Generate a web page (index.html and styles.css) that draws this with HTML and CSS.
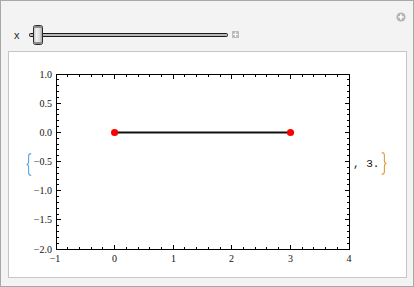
FILE: index.html
```html
<!DOCTYPE html>
<html>
<head>
<meta charset="utf-8">
<link rel="stylesheet" href="styles.css">
</head>
<body>
<div class="window">
  <span class="corner-btn">
    <svg width="10" height="10" viewBox="0 0 10 10"><circle cx="5" cy="5" r="4.6" fill="#b4b4b4"/><path d="M5 2.3V7.7M2.3 5H7.7" stroke="#fff" stroke-width="1.6"/></svg>
  </span>
  <div class="controls">
    <span class="var">x</span>
    <svg class="slider" width="203" height="20" viewBox="0 0 203 20">
      <rect x="0.5" y="8.5" width="198" height="3" rx="1" fill="#9a9a9a" stroke="#1a1a1a"/>
      <rect x="1" y="9.5" width="197" height="1" fill="#d8d8d8"/>
      <defs>
        <linearGradient id="tg" x1="0" x2="1" y1="0" y2="0">
          <stop offset="0" stop-color="#bdbdbd"/>
          <stop offset="0.35" stop-color="#f2f2f2"/>
          <stop offset="0.7" stop-color="#d9d9d9"/>
          <stop offset="1" stop-color="#9c9c9c"/>
        </linearGradient>
      </defs>
      <rect x="4.5" y="0.5" width="9" height="19" rx="2" fill="url(#tg)" stroke="#2a2a2a"/>
      <rect x="5" y="1" width="8" height="2" fill="#8c8c8c"/>
      <rect x="5" y="17" width="8" height="2" fill="#8c8c8c"/>
    </svg>
    <span class="plus-btn">
      <svg width="7" height="7" viewBox="0 0 7 7"><rect width="7" height="7" fill="#bcbcbc"/><path d="M3.5 1.2V5.8M1.2 3.5H5.8" stroke="#fff" stroke-width="1.2"/></svg>
    </span>
  </div>
  <div class="panel">
    <svg class="brace" width="6" height="23" viewBox="0 0 6 23">
      <path d="M5.2 0.6Q2.6 0.6 2.6 3.4V8.6Q2.6 11.5 0.6 11.5Q2.6 11.5 2.6 14.4V19.6Q2.6 22.4 5.2 22.4" fill="none" stroke="#5ba3e6" stroke-width="1.1"/>
    </svg>
    <svg class="plot" width="322" height="200" viewBox="0 0 322 200">
      <rect x="24.5" y="9.5" width="293" height="175" fill="#fff" stroke="#000"/>
      <g stroke="#000" stroke-width="1">
        <path d="M82.5 184V180M141.5 184V180M199.5 184V180M258.5 184V180M82.5 10V14M141.5 10V14M199.5 10V14M258.5 10V14"/>
        <path d="M35.5 184V182M47.5 184V182M59.5 184V182M70.5 184V182M94.5 184V182M106.5 184V182M117.5 184V182M129.5 184V182M152.5 184V182M164.5 184V182M176.5 184V182M188.5 184V182M211.5 184V182M223.5 184V182M234.5 184V182M246.5 184V182M270.5 184V182M281.5 184V182M293.5 184V182M305.5 184V182"/>
        <path d="M35.5 10V12M47.5 10V12M59.5 10V12M70.5 10V12M94.5 10V12M106.5 10V12M117.5 10V12M129.5 10V12M152.5 10V12M164.5 10V12M176.5 10V12M188.5 10V12M211.5 10V12M223.5 10V12M234.5 10V12M246.5 10V12M270.5 10V12M281.5 10V12M293.5 10V12M305.5 10V12"/>
        <path d="M25 38.5H29M25 67.5H29M25 96.5H29M25 125.5H29M25 154.5H29M317 38.5H313M317 67.5H313M317 96.5H313M317 125.5H313M317 154.5H313"/>
        <path d="M25 14.5H27M25 20.5H27M25 26.5H27M25 32.5H27M25 44.5H27M25 49.5H27M25 55.5H27M25 61.5H27M25 73.5H27M25 79.5H27M25 84.5H27M25 90.5H27M25 102.5H27M25 108.5H27M25 114.5H27M25 119.5H27M25 131.5H27M25 137.5H27M25 143.5H27M25 149.5H27M25 160.5H27M25 166.5H27M25 172.5H27M25 178.5H27"/>
        <path d="M317 14.5H315M317 20.5H315M317 26.5H315M317 32.5H315M317 44.5H315M317 49.5H315M317 55.5H315M317 61.5H315M317 73.5H315M317 79.5H315M317 84.5H315M317 90.5H315M317 102.5H315M317 108.5H315M317 114.5H315M317 119.5H315M317 131.5H315M317 137.5H315M317 143.5H315M317 149.5H315M317 160.5H315M317 166.5H315M317 172.5H315M317 178.5H315"/>
      </g>
      <g class="ylab" text-anchor="end">
        <text x="20" y="12.5">1.0</text>
        <text x="20" y="41.5">0.5</text>
        <text x="20" y="70.5">0.0</text>
        <text x="20" y="99.5">−0.5</text>
        <text x="20" y="128.5">−1.0</text>
        <text x="20" y="157.5">−1.5</text>
        <text x="20" y="187.5">−2.0</text>
      </g>
      <g class="xlab" text-anchor="middle">
        <text x="23" y="197">−1</text>
        <text x="82.5" y="197">0</text>
        <text x="141.5" y="197">1</text>
        <text x="199.5" y="197">2</text>
        <text x="258.5" y="197">3</text>
        <text x="317" y="197">4</text>
      </g>
      <line x1="82.6" y1="67.5" x2="258.5" y2="67.5" stroke="#111" stroke-width="2"/>
      <circle cx="82.6" cy="67.5" r="3.6" fill="#f00"/>
      <circle cx="258.5" cy="67.5" r="3.6" fill="#f00"/>
    </svg>
    <span class="tail">, 3.</span>
    <svg class="brace brace-r" width="6" height="23" viewBox="0 0 6 23">
      <path d="M0.8 0.6Q3.4 0.6 3.4 3.4V8.6Q3.4 11.5 5.4 11.5Q3.4 11.5 3.4 14.4V19.6Q3.4 22.4 0.8 22.4" fill="none" stroke="#e39a3c" stroke-width="1.1"/>
    </svg>
  </div>
</div>
</body>
</html>
```
FILE: styles.css
```css
html, body {
  margin: 0;
  padding: 0;
  background: #ffffff;
}

.window {
  position: relative;
  width: 414px;
  height: 287px;
  box-sizing: border-box;
  border: 1px solid #a8a8a8;
  background: #f3f3f3;
  display: flex;
  flex-direction: column;
}

.corner-btn {
  position: absolute;
  top: 11px;
  right: 7px;
  width: 10px;
  height: 10px;
  display: block;
}

.corner-btn svg {
  display: block;
}

.controls {
  margin-top: 24px;
  height: 20px;
  display: flex;
  align-items: center;
  padding-left: 13px;
}

.var {
  width: 15px;
  font-family: "Liberation Sans", Arial, sans-serif;
  font-size: 11px;
  color: #2a2a2a;
  line-height: 12px;
  margin-top: -1px;
}

.slider {
  display: block;
}

.plus-btn {
  display: block;
  width: 7px;
  height: 7px;
  margin-top: -1px;
}

.plus-btn svg {
  display: block;
}

.panel {
  margin: 6px 6px 0 7px;
  height: 227px;
  box-sizing: border-box;
  border: 1px solid #c6c6c6;
  background: #ffffff;
  display: flex;
  align-items: center;
  padding-left: 17px;
}

.brace {
  display: block;
  flex: none;
}

.brace-r {
  margin-left: 2px;
  margin-top: -2px;
}

.plot {
  display: block;
  flex: none;
}

.plot text {
  font-family: "Liberation Serif", "Times New Roman", serif;
  font-size: 10px;
  fill: #111;
}

.tail {
  font-family: "Liberation Mono", "Courier New", monospace;
  font-size: 11px;
  color: #111;
  margin-left: -1px;
  margin-top: -2px;
  white-space: pre;
}
```
